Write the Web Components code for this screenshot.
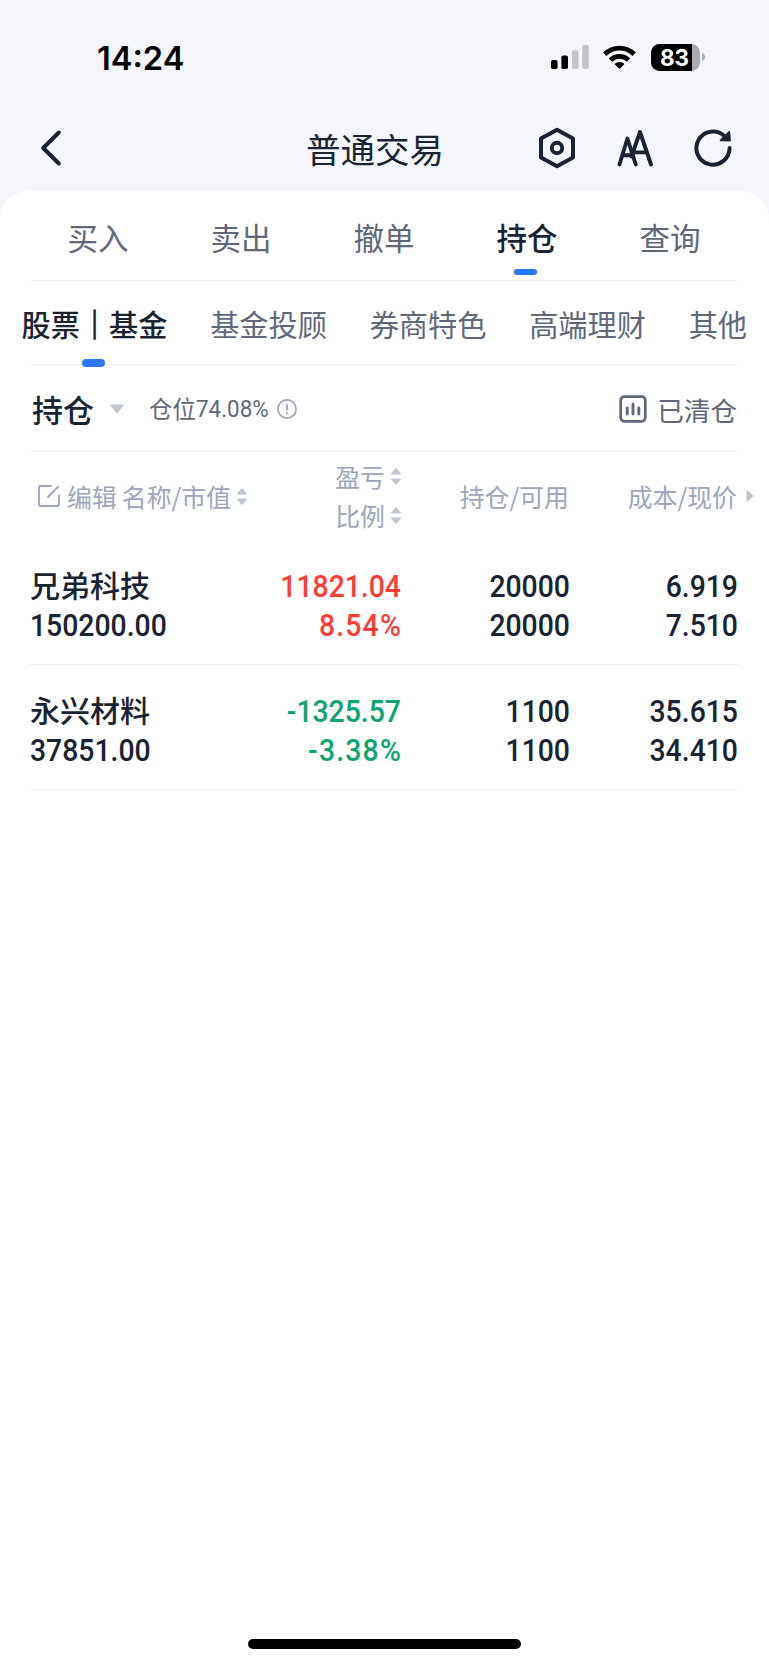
<!DOCTYPE html>
<html lang="zh-CN">
<head>
<meta charset="utf-8">
<title>普通交易</title>
<style>
  html, body {
    margin: 0;
    padding: 0;
  }

  body {
    width: 769px;
    height: 1665px;
    overflow: hidden;
    background: #f5f6fa;
    color: #1a2332;
    font-family: "Noto Sans CJK SC", sans-serif;
  }
</style>
</head>
<body>
<trade-app></trade-app>

<script>
const ICONS = {
  signal: [38, 24, `
    <rect x="0" y="15" width="6.6" height="9" rx="1.8"/>
    <rect x="10.4" y="10.5" width="6.6" height="13.5" rx="1.8"/>
    <g fill="#c4c4c9"><rect x="20.9" y="5.3" width="6.6" height="18.7" rx="1.8"/>
    <rect x="31.2" y="0" width="6.6" height="24" rx="1.8"/></g>`],
  wifi: [33, 24, `
    <g fill="none" stroke="currentColor" stroke-width="4.8">
      <path d="M1.9 9.2a20.7 20.7 0 0 1 29.2 0"/>
      <path d="M7.5 15a12.8 12.8 0 0 1 18 0"/>
    </g>
    <path d="M16.5 24l-5-5a7.1 7.1 0 0 1 10 0z"/>`],
  cap: [3, 8, `<path d="M0 0c2 .7 3 2 3 4s-1 3.300-3 4z"/>`],
  back: [22, 38, `<path d="M18.800 3.500L3.200 19l15.600 15.500" fill="none" stroke="currentColor" stroke-width="4" stroke-linecap="round" stroke-linejoin="round"/>`],
  settings: [38, 42, `
    <g fill="none" stroke="currentColor" stroke-width="4" stroke-linejoin="round">
      <path d="M19 2.700L35 11.600v18.800L19 39.300 3 30.400V11.600z"/>
      <circle cx="19" cy="21" r="5.200"/>
    </g>`],
  font: [36, 38, `
    <g fill="none" stroke="currentColor" stroke-width="3.900" stroke-linecap="round" stroke-linejoin="round">
      <path d="M2.500 35.500L10.400 9.500l8.400 26M5.600 26.300h10.500"/>
      <path d="M14.500 27.500L23 3l11 32.500M18.500 23.400h11"/>
    </g>`],
  refresh: [40, 40, `
    <path d="M36.600 20A16.600 16.600 0 1 1 31.500 8.100" fill="none" stroke="currentColor" stroke-width="4" stroke-linecap="round"/>
    <path d="M36.200 3.800l.8 8.900-9.400-.4z" stroke="currentColor" stroke-width="1.800" stroke-linejoin="round"/>`],
  down: [14, 10, `<path d="M.8 .5h12.400q.8 .2 .3 .9L7.800 9q-.8 .9-1.600 0L.5 1.400q-.5-.7 .3-.9z"/>`],
  info: [20, 20, `
    <circle cx="10" cy="10" r="9.100" fill="none" stroke="currentColor" stroke-width="1.600"/>
    <path d="M10 5.200v6.300" stroke="currentColor" stroke-width="1.800"/>
    <circle cx="10" cy="14.100" r="1.100"/>`],
  chart: [28, 28, `
    <rect x="1.700" y="1.700" width="24.600" height="24.600" rx="3.500" fill="none" stroke="currentColor" stroke-width="2.700"/>
    <path d="M8.200 13v6M14 9.200v9.800M19.800 13v6" stroke="currentColor" stroke-width="2.900" stroke-linecap="round"/>`],
  edit: [24, 24, `
    <path d="M14.500 2H4Q2 2 2 4v16q0 2 2 2h16q2 0 2-2V10.500M10.500 13.500L21.500 2.400" fill="none" stroke="currentColor" stroke-width="1.800"/>`],
  sort: [10, 17, `
    <path d="M4.300 .5q.7-.7 1.400 0L9.700 5.500q.5 1-.5 1H.8q-1 0-.5-1z"/>
    <path d="M4.300 16.500q.7 .7 1.400 0L9.700 11.500q.5-1-.5-1H.8q-1 0-.5 1z"/>`],
  next: [8, 12, `<path d="M.5 .8v10.400q0 .8 .8 .5L7 6.700q.7-.7 0-1.400L1.300 .3q-.8-.3-.8 .5z"/>`]
}

class AppIcon extends HTMLElement {
  connectedCallback() {
    const [w, h, body] = ICONS[this.getAttribute('name')]

    this.attachShadow({ mode: 'open' }).innerHTML = `
      <style>
        :host { display: block; flex: none; width: ${w}px; height: ${h}px; }
        svg   { display: block; }
      </style>
      <svg width="${w}" height="${h}" viewBox="0 0 ${w} ${h}" fill="currentColor">${body}</svg>
    `
  }
}

// all the other elements are static: one template string each
const define = (tag, html) => customElements.define(tag, class extends HTMLElement {
  constructor() {
    super()
    this.attachShadow({ mode: 'open' }).innerHTML = html
  }
})

customElements.define('app-icon', AppIcon)

// narrow figures
define('num-text', `
  <style>
    :host {
      display: block;
      font: 500 31px/39px Roboto, sans-serif;
      white-space: nowrap;
      transform: scaleX(.915);
      transform-origin: right center;
    }
    :host([start]) { transform-origin: left center; }
  </style>
  <slot></slot>
`)

define('status-bar', `
  <style>
    :host {
      display: flex;
      align-items: center;
      height: 114px;
      padding: 0 64px 0 97px;
      box-sizing: border-box;
      color: #000;
    }
    time {
      flex: 1;
      margin-top: 2px;
      font: 600 32.600px/40px Inter, sans-serif;
    }
    .wifi { margin: 0 15px 0 14px; }
    .battery {
      width: 49px;
      height: 27px;
      margin-right: 2px;
      padding-right: 2px;
      box-sizing: border-box;
      border-radius: 8.500px;
      background: linear-gradient(90deg, #000 41px, #acacb0 41px);
      color: #fff;
      font: 700 22.500px/27px Inter, sans-serif;
      text-align: center;
    }
    .cap { color: #acacb0; }
  </style>
  <time>14:24</time>
  <app-icon name="signal"></app-icon>
  <app-icon class="wifi" name="wifi"></app-icon>
  <div class="battery">83</div>
  <app-icon class="cap" name="cap"></app-icon>
`)

define('nav-bar', `
  <style>
    :host {
      display: grid;
      grid-template-columns: 266px 138px 1fr;
      align-items: center;
      height: 77px;
      padding: 0 36px 9px 40px;
      box-sizing: border-box;
    }
    h1 {
      margin: 0;
      font-size: 34.500px;
      line-height: 50px;
      font-weight: 400;
      white-space: nowrap;
    }
    .actions {
      display: flex;
      align-items: center;
      justify-content: flex-end;
      gap: 41px;
    }
    .refresh { margin-left: -1px; }
  </style>
  <app-icon name="back"></app-icon>
  <h1><slot></slot></h1>
  <div class="actions">
    <app-icon name="settings"></app-icon>
    <app-icon name="font"></app-icon>
    <app-icon class="refresh" name="refresh"></app-icon>
  </div>
`)

define('tab-item', `
  <style>
    :host {
      display: flex;
      flex-direction: column;
      align-items: center;
      color: #5f6879;
      white-space: nowrap;
    }
    :host([active]) {
      color: #1a2332;
      font-weight: 500;
    }
    i { display: none; }
    :host([active]) i {
      display: block;
      flex: none;
      width: 23px;
      height: var(--mark-height, 6px);
      margin-top: var(--mark-gap);
      margin-right: var(--mark-shift, 0);
      border-radius: 4px;
      background: #2d78f8;
    }
  </style>
  <span><slot></slot></span><i></i>
`)

define('main-tabs', `
  <style>
    :host {
      display: grid;
      grid-template-columns: repeat(5, 143px);
      justify-content: center;
      height: 90px;
      margin: 0 32px 0 31px;
      padding-top: 24px;
      box-sizing: border-box;
      border-bottom: 1px solid #eeeff1;
      font-size: 30.500px;
      line-height: 44px;
      --mark-gap: 10px;
      --mark-shift: 3px;
    }
  </style>
  <slot></slot>
`)

define('sub-tabs', `
  <style>
    :host {
      display: flex;
      justify-content: space-between;
      height: 84px;
      padding: 21px 22px 0 21.500px;
      box-sizing: border-box;
      background: linear-gradient(#eeeff1, #eeeff1) 31px 100% / 706px 1px no-repeat;
      font-size: 29.200px;
      line-height: 42px;
      --mark-gap: 15px;
      --mark-height: 8px;
      --mark-shift: 1px;
    }
  </style>
  <slot></slot>
`)

define('position-bar', `
  <style>
    :host {
      display: flex;
      align-items: center;
      height: 87px;
      margin: 0 32px 0 31px;
      box-sizing: border-box;
      border-bottom: 1px solid #eeeff1;
      color: #5f6879;
    }
    b {
      margin-left: 1px;
      color: #1a2332;
      font-size: 31px;
      font-weight: 500;
    }
    .down { margin: 2px 25px 0 16px; color: #c0c7d3; }
    .label { font-size: 23.400px; }
    num-text {
      width: 79px;
      padding-top: 1px;
      font-size: 24.500px;
      font-weight: 400;
    }
    .info { color: #9aa4b8; margin: 1px 0 0 2px; }
    .closed {
      display: flex;
      align-items: center;
      gap: 10px;
      margin: 2px 0 0 auto;
      font-size: 26.600px;
    }
  </style>
  <b>持仓</b>
  <app-icon class="down" name="down"></app-icon>
  <span class="label">仓位</span><num-text start>74.08%</num-text>
  <app-icon class="info" name="info"></app-icon>
  <div class="closed"><app-icon name="chart"></app-icon><span>已清仓</span></div>
`)

define('table-head', `
  <style>
    :host {
      display: grid;
      grid-template-columns: 230px 141px 168px 185px;
      align-items: center;
      height: 88px;
      padding-left: 30px;
      color: #9ca6ba;
      font-size: 24.900px;
      line-height: 39px;
      white-space: nowrap;
    }
    div {
      display: flex;
      align-items: center;
      justify-content: flex-end;
    }
    .name { justify-content: flex-start; padding-left: 7px; }
    .name span { margin: 0 5px 0 6px; }
    .profit { flex-direction: column; align-items: flex-end; }
    app-icon { color: #bec5d2; }
    app-icon[name="edit"] { color: inherit; }
    app-icon[name="sort"] { margin-left: 6px; }
    app-icon[name="next"] { margin-left: 9px; }
  </style>
  <div class="name"><app-icon name="edit"></app-icon><span>编辑</span>名称/市值<app-icon name="sort"></app-icon></div>
  <div class="profit">
    <div>盈亏<app-icon name="sort"></app-icon></div>
    <div>比例<app-icon name="sort"></app-icon></div>
  </div>
  <div>持仓/可用</div>
  <div>成本/现价<app-icon name="next"></app-icon></div>
`)

class HoldingRow extends HTMLElement {
  constructor() {
    super()
    this.attachShadow({ mode: 'open' })
  }

  connectedCallback() {
    const { name, value, profit, rate, held, usable, cost, price } = this.dataset
    const color = profit.startsWith('-') ? '#0ca571' : '#ff3b35'

    this.shadowRoot.innerHTML = `
      <style>
        :host {
          display: grid;
          grid-template-columns: 200px 172px 169px 168px;
          height: 125px;
          margin: 0 30px 0 29px;
          padding-top: 27px;
          box-sizing: border-box;
          border-bottom: 1px solid #eeeff1;
          text-align: right;
        }
        .name { padding-left: 1px; text-align: left; }
        h2 {
          margin: -2px 0 2px;
          font-size: 30px;
          line-height: 39px;
          font-weight: 500;
        }
        .profit { color: ${color}; }
        .rate { margin-right: -1px; letter-spacing: 1.300px; }
      </style>
      <div class="name"><h2>${name}</h2><num-text start>${value}</num-text></div>
      <div class="profit"><num-text>${profit}</num-text><num-text class="rate">${rate}</num-text></div>
      <div><num-text>${held}</num-text><num-text>${usable}</num-text></div>
      <div><num-text>${cost}</num-text><num-text>${price}</num-text></div>
    `
  }
}

customElements.define('holding-row', HoldingRow)

define('trade-app', `
  <style>
    :host {
      display: flex;
      flex-direction: column;
      height: 1665px;
    }
    main {
      flex: 1;
      display: flex;
      flex-direction: column;
      border-radius: 28px 28px 0 0;
      background: #fff;
    }
    .bar { -webkit-text-stroke: 1px; }
    .home {
      width: 273px;
      height: 10px;
      margin: auto auto 16px 248px;
      border-radius: 5px;
      background: #000;
    }
  </style>
  <status-bar></status-bar>
  <nav-bar>普通交易</nav-bar>
  <main>
    <main-tabs>
      <tab-item>买入</tab-item>
      <tab-item>卖出</tab-item>
      <tab-item>撤单</tab-item>
      <tab-item active>持仓</tab-item>
      <tab-item>查询</tab-item>
    </main-tabs>
    <sub-tabs>
      <tab-item active>股票<span class="bar">｜</span>基金</tab-item>
      <tab-item>基金投顾</tab-item>
      <tab-item>券商特色</tab-item>
      <tab-item>高端理财</tab-item>
      <tab-item>其他</tab-item>
    </sub-tabs>
    <position-bar></position-bar>
    <table-head></table-head>
    <holding-row data-name="兄弟科技" data-value="150200.00" data-profit="11821.04" data-rate="8.54%"
      data-held="20000" data-usable="20000" data-cost="6.919" data-price="7.510"></holding-row>
    <holding-row data-name="永兴材料" data-value="37851.00" data-profit="-1325.57" data-rate="-3.38%"
      data-held="1100" data-usable="1100" data-cost="35.615" data-price="34.410"></holding-row>
    <div class="home"></div>
  </main>
`)
</script>
</body>
</html>
